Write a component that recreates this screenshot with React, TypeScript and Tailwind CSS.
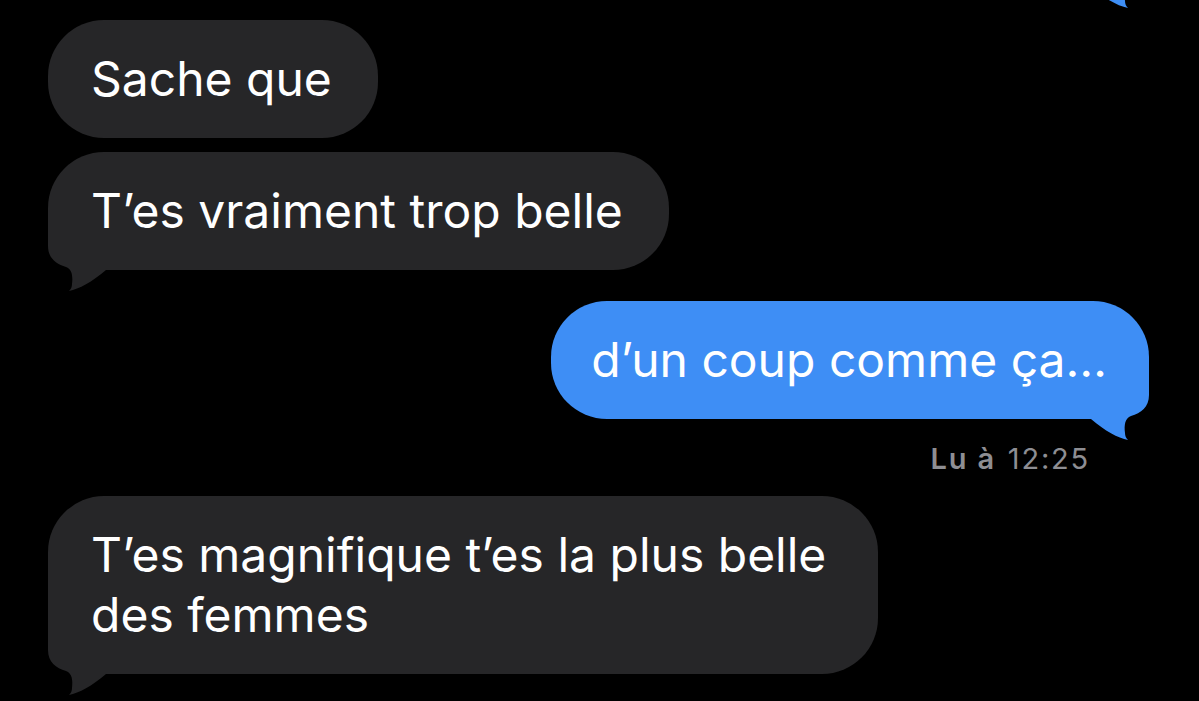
import type { ReactNode } from "react";

const GRAY = "#262628";
const BLUE = "#3e8ef5";

function Tail({ color, side }: { color: string; side: "left" | "right" }) {
  return (
    <svg
      aria-hidden="true"
      width="60"
      height="82"
      viewBox="0 -60 60 82"
      className={`absolute bottom-[-22px] ${side === "left" ? "left-0" : "right-0 -scale-x-100"}`}
    >
      <path
        d="M0,-60 L0,-24 C0,-12 8,-6 18,-3 C24,-1 25,6 24,14 C24,17 23,19 21,21 C31,19 44,12 58,0 L60,0 L60,-60 Z"
        fill={color}
      />
    </svg>
  );
}

function Bubble({
  children,
  from,
  tail = false,
  className = "",
}: {
  children: ReactNode;
  from: "them" | "me";
  tail?: boolean;
  className?: string;
}) {
  const me = from === "me";
  return (
    <div className={`flex ${me ? "justify-end" : "justify-start"} ${className}`}>
      <div
        className={`relative max-w-[830px] rounded-[56px] py-[29px] text-[48px] leading-[60px] text-white ${
          me ? "bg-[#3e8ef5] pl-[40px] pr-[42px]" : "bg-[#262628] pl-[43px] pr-[46px]"
        }`}
      >
        {tail && <Tail color={me ? BLUE : GRAY} side={me ? "right" : "left"} />}
        <span className="relative">{children}</span>
      </div>
    </div>
  );
}

export default function App() {
  return (
    <div
      className="flex h-[701px] w-full flex-col overflow-hidden bg-black pl-[48px] pr-[50px]"
      style={{ fontFamily: "Inter, 'Noto Sans', sans-serif" }}
    >
      {/* earlier outgoing bubble, scrolled off the top: only its tail shows */}
      <div className="mt-[-131px] flex justify-end">
        <div className="relative h-[118px] w-[300px] rounded-[56px] bg-[#3e8ef5]">
          <Tail color={BLUE} side="right" />
        </div>
      </div>

      <Bubble from="them" className="mt-[33px]">
        Sache que
      </Bubble>
      <Bubble from="them" tail className="mt-[14px]">
        T’es vraiment trop belle
      </Bubble>

      <Bubble from="me" tail className="mt-[31px]">
        d’un coup comme ça…
      </Bubble>
      <div className="mt-[24px] flex justify-end pr-[59px] text-[29px] leading-[32px] tracking-[1.8px] text-[#8e8e93]">
        <span className="font-semibold">Lu à</span>
        <span className="ml-[12px]">12:25</span>
      </div>

      <Bubble from="them" tail className="mt-[21px]">
        T’es magnifique t’es la plus belle des femmes
      </Bubble>
    </div>
  );
}
